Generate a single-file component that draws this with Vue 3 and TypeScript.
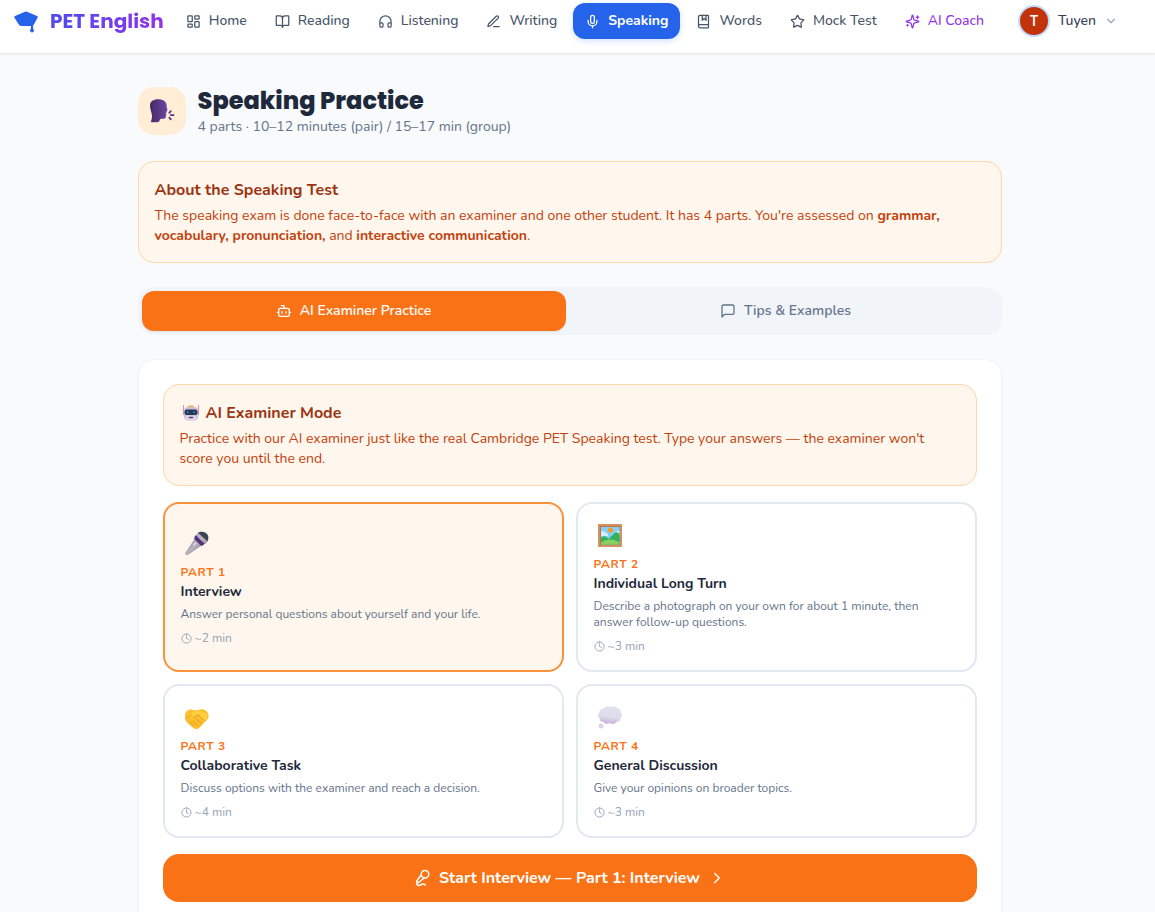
<script setup lang="ts">
import { computed, h, ref } from 'vue'

const icons: Record<string, string[]> = {
  dashboard: [
    'M4 3h5a1 1 0 0 1 1 1v7a1 1 0 0 1-1 1H4a1 1 0 0 1-1-1V4a1 1 0 0 1 1-1z',
    'M15 3h5a1 1 0 0 1 1 1v3a1 1 0 0 1-1 1h-5a1 1 0 0 1-1-1V4a1 1 0 0 1 1-1z',
    'M15 12h5a1 1 0 0 1 1 1v7a1 1 0 0 1-1 1h-5a1 1 0 0 1-1-1v-7a1 1 0 0 1 1-1z',
    'M4 16h5a1 1 0 0 1 1 1v3a1 1 0 0 1-1 1H4a1 1 0 0 1-1-1v-3a1 1 0 0 1 1-1z',
  ],
  book: [
    'M12 7v14',
    'M3 18a1 1 0 0 1-1-1V4a1 1 0 0 1 1-1h5a4 4 0 0 1 4 4 4 4 0 0 1 4-4h5a1 1 0 0 1 1 1v13a1 1 0 0 1-1 1h-6a3 3 0 0 0-3 3 3 3 0 0 0-3-3z',
  ],
  headphones: [
    'M3 14h3a2 2 0 0 1 2 2v3a2 2 0 0 1-2 2H5a2 2 0 0 1-2-2v-7a9 9 0 0 1 18 0v7a2 2 0 0 1-2 2h-1a2 2 0 0 1-2-2v-3a2 2 0 0 1 2-2h3',
  ],
  pen: [
    'M12 20h9',
    'M16.376 3.622a1 1 0 0 1 3.002 3.002L7.368 18.635a2 2 0 0 1-.855.506l-2.872.838a.5.5 0 0 1-.62-.62l.838-2.872a2 2 0 0 1 .506-.854z',
  ],
  mic: [
    'M12 2a3 3 0 0 0-3 3v7a3 3 0 0 0 6 0V5a3 3 0 0 0-3-3Z',
    'M19 10v2a7 7 0 0 1-14 0v-2',
    'M12 19v3',
  ],
  bookmarked: [
    'M10 2v8l3-3 3 3V2',
    'M4 19.5v-15A2.5 2.5 0 0 1 6.5 2H19a1 1 0 0 1 1 1v18a1 1 0 0 1-1 1H6.5a1 1 0 0 1 0-5H20',
  ],
  star: [
    'M11.525 2.295a.53.53 0 0 1 .95 0l2.31 4.679a2.123 2.123 0 0 0 1.595 1.16l5.166.756a.53.53 0 0 1 .294.904l-3.736 3.638a2.123 2.123 0 0 0-.611 1.878l.882 5.14a.53.53 0 0 1-.771.56l-4.618-2.428a2.122 2.122 0 0 0-1.973 0L6.396 21.01a.53.53 0 0 1-.77-.56l.881-5.139a2.122 2.122 0 0 0-.611-1.879L2.16 9.795a.53.53 0 0 1 .294-.906l5.165-.755a2.122 2.122 0 0 0 1.597-1.16z',
  ],
  sparkles: [
    'M9.937 15.5A2 2 0 0 0 8.5 14.063l-6.135-1.582a.5.5 0 0 1 0-.962L8.5 9.936A2 2 0 0 0 9.937 8.5l1.582-6.135a.5.5 0 0 1 .963 0L14.063 8.5A2 2 0 0 0 15.5 9.937l6.135 1.581a.5.5 0 0 1 0 .964L15.5 14.063a2 2 0 0 0-1.437 1.437l-1.582 6.135a.5.5 0 0 1-.963 0z',
    'M20 3v4',
    'M22 5h-4',
    'M4 17v2',
    'M5 18H3',
  ],
  bot: [
    'M12 8V4H8',
    'M6 8h12a2 2 0 0 1 2 2v8a2 2 0 0 1-2 2H6a2 2 0 0 1-2-2v-8a2 2 0 0 1 2-2z',
    'M2 14h2',
    'M20 14h2',
    'M15 13v2',
    'M9 13v2',
  ],
  message: ['M21 15a2 2 0 0 1-2 2H7l-4 4V5a2 2 0 0 1 2-2h14a2 2 0 0 1 2 2z'],
  clock: ['M12 2a10 10 0 1 0 0 20 10 10 0 1 0 0-20z', 'M12 6v6l4 2'],
  micVocal: [
    'm11 7.601-5.994 8.19a1 1 0 0 0 .1 1.298l.817.818a1 1 0 0 0 1.314.087L15.09 12',
    'M16.5 21.174C15.5 20.5 14.372 20 13 20c-2.058 0-3.928 2.356-6 2-2.072-.356-2.775-3.369-1.5-4.5',
    'M16 2a5 5 0 1 0 0 10 5 5 0 1 0 0-10z',
  ],
  chevronDown: ['m6 9 6 6 6-6'],
  chevronRight: ['m9 18 6-6-6-6'],
}

const Icon = (props: { name: string; size: number }) =>
  h(
    'svg',
    {
      width: props.size,
      height: props.size,
      viewBox: '0 0 24 24',
      fill: 'none',
      stroke: 'currentColor',
      'stroke-width': 2,
      'stroke-linecap': 'round',
      'stroke-linejoin': 'round',
      'aria-hidden': 'true',
    },
    icons[props.name].map((d) => h('path', { d })),
  )
Icon.props = ['name', 'size']

const navItems = [
  { label: 'Home', icon: 'dashboard' },
  { label: 'Reading', icon: 'book' },
  { label: 'Listening', icon: 'headphones' },
  { label: 'Writing', icon: 'pen' },
  { label: 'Speaking', icon: 'mic', active: true },
  { label: 'Words', icon: 'bookmarked' },
  { label: 'Mock Test', icon: 'star' },
  { label: 'AI Coach', icon: 'sparkles', accent: true },
]

const tabs = [
  { id: 'practice', label: 'AI Examiner Practice', icon: 'bot' },
  { id: 'tips', label: 'Tips & Examples', icon: 'message' },
]
const activeTab = ref('practice')

const parts = [
  { id: 1, title: 'Interview', text: 'Answer personal questions about yourself and your life.', time: '~2 min' },
  { id: 2, title: 'Individual Long Turn', text: 'Describe a photograph on your own for about 1 minute, then answer follow-up questions.', time: '~3 min' },
  { id: 3, title: 'Collaborative Task', text: 'Discuss options with the examiner and reach a decision.', time: '~4 min' },
  { id: 4, title: 'General Discussion', text: 'Give your opinions on broader topics.', time: '~3 min' },
]
const selectedId = ref(1)
const selected = computed(() => parts.find((p) => p.id === selectedId.value)!)
</script>

<template>
  <div class="page">
    <header class="topbar">
      <a class="brand" href="#">
        <svg class="brand-mark" width="24" height="24" viewBox="0 0 24 24" aria-hidden="true">
          <path d="M11 2.700q1-.5 2 0l10 4.200c.9.4 1.100 1.100.6 1.900l-3.300 6c-.8 1.600-1.800 2.200-3.300 2.200H8c-1.700 0-2.900-.8-3.700-2.200L.5 8.800c-.5-.8-.3-1.500.5-1.900z" fill="#2563eb" />
          <path d="M18 12v9" stroke="#2563eb" stroke-width="2.200" stroke-linecap="round" />
          <circle cx="18" cy="21.500" r="1.900" fill="#2563eb" />
        </svg>
        <span class="brand-name">PET English</span>
      </a>
      <nav class="nav" aria-label="Main">
        <a
          v-for="item in navItems"
          :key="item.label"
          href="#"
          class="nav-link"
          :class="{ active: item.active, accent: item.accent }"
        >
          <Icon :name="item.icon" :size="15" />
          <span>{{ item.label }}</span>
        </a>
      </nav>
      <button class="user" type="button">
        <span class="avatar">T</span>
        <span>Tuyen</span>
        <Icon class="user-chevron" name="chevronDown" :size="14" />
      </button>
    </header>

    <main class="main">
      <div class="heading">
        <div class="heading-icon">
          <svg width="28" height="28" viewBox="0 0 28 28" aria-hidden="true">
            <defs>
              <linearGradient id="head" x1="0" x2="1">
                <stop offset="0" stop-color="#432b62" />
                <stop offset="1" stop-color="#6d45a2" />
              </linearGradient>
            </defs>
            <path d="M2 8c0-3.500 3.500-5.800 8-5.800 5.500 0 8.600 2.600 8.600 6.300 0 1.400.2 2.600.7 3.800.4.900.1 1.500-.7 1.800l.2 1.200-1.200.9.900 1-.6 1c.4 2.600-1.200 4-3.800 3.600-1.400-.2-2.100.4-2.400 1.500-.3 1.300-1 2-2.300 2H4.200c-1.200 0-1.400-.6-1-1.600 1-2.700 1.100-5.100.3-7.700C2.500 12.900 2 10.600 2 8z" fill="url(#head)" />
            <path d="m21.300 15.800 1.500-1.700M22.800 18.200h2.700M21.300 20.700l1.500 1.600" stroke="#57378a" stroke-width="1.800" stroke-linecap="round" />
          </svg>
        </div>
        <div>
          <h1>Speaking Practice</h1>
          <p>4 parts · 10–12 minutes (pair) / 15–17 min (group)</p>
        </div>
      </div>

      <section class="notice">
        <h2>About the Speaking Test</h2>
        <p>
          The speaking exam is done face-to-face with an examiner and one other student. It has 4 parts.
          You're assessed on <strong>grammar, vocabulary, pronunciation,</strong> and
          <strong>interactive communication</strong>.
        </p>
      </section>

      <div class="tabs" role="tablist">
        <button
          v-for="tab in tabs"
          :key="tab.id"
          type="button"
          role="tab"
          class="tab"
          :class="{ active: tab.id === activeTab }"
          :aria-selected="tab.id === activeTab"
          @click="activeTab = tab.id"
        >
          <Icon :name="tab.icon" :size="16" />
          <span>{{ tab.label }}</span>
        </button>
      </div>

      <section class="panel">
        <div class="notice">
          <h2 class="with-emoji">
            <svg width="22" height="20" viewBox="0 0 22 20" aria-hidden="true">
              <path d="M3.500 2.500v9M18.500 2.500v9" stroke="#f4849c" stroke-width="1" stroke-linecap="round" />
              <rect x="8" y="2.500" width="6" height="3" rx="1.500" fill="#f5a742" />
              <rect x="4" y="4" width="14" height="13.500" rx="4" fill="#c9c0dc" />
              <rect x="5.500" y="12.500" width="11" height="5" rx="2.500" fill="#ddd6ea" />
              <rect x="4.500" y="6.500" width="13" height="5.500" rx="2.500" fill="#27334f" />
              <rect x="6.800" y="8" width="2" height="2.500" rx="1" fill="#2580cc" />
              <rect x="13.200" y="8" width="2" height="2.500" rx="1" fill="#2580cc" />
              <rect x="8.700" y="13.700" width="4.600" height="1.500" rx=".7" fill="#4d4460" />
            </svg>
            <span>AI Examiner Mode</span>
          </h2>
          <p>
            Practice with our AI examiner just like the real Cambridge PET Speaking test. Type your answers —
            the examiner won't score you until the end.
          </p>
        </div>

        <div class="parts">
          <button
            v-for="part in parts"
            :key="part.id"
            type="button"
            class="part"
            :class="{ selected: part.id === selectedId }"
            :aria-pressed="part.id === selectedId"
            @click="selectedId = part.id"
          >
            <svg class="part-emoji" width="32" height="32" viewBox="0 0 32 32" aria-hidden="true">
              <template v-if="part.id === 1">
                <defs>
                  <linearGradient id="handle" x1="0" y1="0" x2="1" y2="1">
                    <stop offset=".1" stop-color="#77717f" />
                    <stop offset=".5" stop-color="#bbb5c2" />
                    <stop offset=".9" stop-color="#77727f" />
                  </linearGradient>
                </defs>
                <path d="m14 10.500 6.500 7L6.800 27c-1.200.8-3.300-1-2.400-2.600z" fill="url(#handle)" />
                <path d="M16.500 5c3.500-2.500 9-1.500 10.500 2.500 1.200 3.500-.5 6.800-3.500 8.300z" fill="#3d4353" />
                <path d="M15 7 23.500 15.500c-.7 1.600-2 2.400-3.500 2.200l-6.700-6.700c0-1.600.5-3 1.700-4z" fill="#533379" />
                <path d="M17 4.800 26 13 24.200 15.300 14.900 7z" fill="#b4afc0" />
                <path d="m13 16.500 1.500-1.500" stroke="#e6e2eb" stroke-width="1.500" stroke-linecap="round" />
              </template>
              <template v-else-if="part.id === 2">
                <rect x="4" y="4" width="24" height="23" rx="1" fill="#d4915f" />
                <rect x="6" y="6" width="20" height="19" fill="#b8754b" />
                <rect x="7" y="7" width="18.500" height="17.500" fill="#84d0fb" />
                <path d="M7 12c2-2 4-.5 4.500 1 2-.5 3 1.200 2.500 3H7zM25.500 11c-2.500-1-4 1-3.500 3l3.500 1z" fill="#d8ecff" />
                <circle cx="16.500" cy="10" r="2.600" fill="#f59b25" />
                <path d="M7 18c3-3 5-2 7.500 1l6-6c2-1.500 3.500-.5 5 1v10.500H7z" fill="#33b25f" />
                <path d="M7 22.500c6-4 12.500-4 18.500 0v2H7z" fill="#8bcf62" />
              </template>
              <template v-else-if="part.id === 3">
                <g transform="translate(0 2)">
                  <path d="M4 11.500C4.500 7 8 4.500 12 6c2 .6 3.500.6 5.500-.3 4.500-1.700 9.700.8 10 5.300.2 3-1.200 5-3.200 6.600l-5.500 5.900c-2 2-4.800 2-6.500.5l-5-4.200c-2.600-2-3.700-5-3.300-8.300z" fill="#fcc02f" />
                  <path d="M12.500 7.500c3-1.500 6-1.500 8.500 0l5 2.500c.8 2.700 0 5-2.200 7l-7.600-6.200-3.400 1.800c-2.300 0-2.600-2.900-.3-5.100z" fill="#ffcf3f" />
                  <path d="m17 11 6.500 5.500M14.500 14.500l6 5M12 17l5 4.500M8.500 17.500l5 5M17 10.800l-3.500 1.900M6 14.500l3.500-3" fill="none" stroke="#e39a26" stroke-width="1" stroke-linecap="round" />
                </g>
              </template>
              <template v-else>
                <defs>
                  <linearGradient id="cloud" x1=".6" y1="0" x2=".4" y2="1">
                    <stop offset="0" stop-color="#e0e2ea" />
                    <stop offset=".6" stop-color="#e0dcea" />
                    <stop offset="1" stop-color="#c5afdf" />
                  </linearGradient>
                </defs>
                <path d="M10 6.500c1.500-2.200 4.300-2.700 6.500-1.500 2.500-1.300 5.500-.8 7 1.300 2.200.2 3.500 2 3.300 4 1.700 1.700 1.600 4.200-.2 5.700.2 2.500-1.800 4-3.800 3.800-1.700 2.400-4.900 2.700-7 1.200-2.300 1.500-5.300.9-6.700-1.300-2.300.1-3.700-1.500-3.500-3.500-2-1.500-2.100-4.300-.2-5.800.2-2.300 2-4 4.600-3.900z" fill="url(#cloud)" />
                <circle cx="7" cy="24" r="2.500" fill="#dbd4e7" />
              </template>
            </svg>
            <span class="part-label">PART {{ part.id }}</span>
            <span class="part-title">{{ part.title }}</span>
            <span class="part-text">{{ part.text }}</span>
            <span class="part-time">
              <Icon name="clock" :size="11" />
              <span>{{ part.time }}</span>
            </span>
          </button>
        </div>

        <button class="start" type="button">
          <Icon name="micVocal" :size="18" />
          <span>Start Interview — Part {{ selected.id }}: {{ selected.title }}</span>
          <Icon name="chevronRight" :size="18" />
        </button>
      </section>
    </main>
  </div>
</template>

<style>
body {
  margin: 0;
  background: #f8fafc;
}
</style>

<style scoped>
.page {
  min-height: 100vh;
  background: #f8fafc;
  color: #1e293b;
  font-family: Nunito, Roboto, "Liberation Sans", sans-serif;
  font-size: 14px;
  line-height: 20px;
}

.page *,
.page {
  box-sizing: border-box;
}

h1,
h2,
p {
  margin: 0;
}

button {
  margin: 0;
  border: 0;
  background: none;
  font: inherit;
  color: inherit;
  cursor: pointer;
}

a {
  color: inherit;
  text-decoration: none;
}

svg {
  display: block;
  flex-shrink: 0;
}

.topbar {
  display: flex;
  align-items: center;
  padding: 3px 37px 14px 14px;
  border-bottom: 1px solid #e9eef4;
  background: #fff;
  box-shadow: 0 1px 2px rgba(15, 23, 42, 0.05);
}

.brand {
  display: flex;
  align-items: center;
  gap: 12px;
}

.brand-name {
  font-family: Poppins, Inter, "Open Sans", sans-serif;
  font-size: 20px;
  line-height: 28px;
  font-weight: 700;
  white-space: nowrap;
  color: transparent;
  background: linear-gradient(90deg, #4f4cec, #9333ea);
  background-clip: text;
}

.nav {
  display: flex;
  gap: 4px;
  margin-left: 10px;
}

.nav-link {
  display: flex;
  align-items: center;
  gap: 8px;
  padding: 8px 12px;
  border-radius: 12px;
  font-weight: 500;
  color: #475569;
  white-space: nowrap;
}

.nav-link.active {
  background: #2563eb;
  color: #fff;
  font-weight: 700;
  box-shadow: 0 2px 6px rgba(37, 99, 235, 0.2);
}

.nav-link.accent {
  color: #9333ea;
}

.user {
  display: flex;
  align-items: center;
  gap: 8px;
  margin-left: auto;
  padding: 0;
  font-weight: 500;
  color: #334155;
}

.avatar {
  display: grid;
  place-items: center;
  width: 32px;
  height: 32px;
  border: 2px solid #bfdbfe;
  border-radius: 50%;
  background: #c2330c;
  color: #fff;
  font-family: Roboto, sans-serif;
}

.user-chevron {
  color: #94a3b8;
}

.main {
  max-width: 864px;
  margin: 0 auto;
  padding: 31px 32px 32px 16px;
  box-sizing: content-box;
}

.heading {
  display: flex;
  align-items: center;
  gap: 12px;
  margin-bottom: 24px;
}

.heading-icon {
  display: grid;
  place-items: center;
  width: 48px;
  height: 48px;
  border-radius: 16px;
  background: #ffedd5;
}

h1 {
  font-family: Poppins, Inter, "Open Sans", sans-serif;
  font-size: 24px;
  line-height: 32px;
  font-weight: 800;
}

.heading p {
  color: #64748b;
}

.notice {
  padding: 16px;
  border: 1px solid #fed7aa;
  border-radius: 16px;
  background: #fff7ed;
  color: #c2410c;
}

.notice h2 {
  margin-bottom: 4px;
  font-size: 16px;
  line-height: 24px;
  font-weight: 700;
  color: #9a3412;
}

.notice .with-emoji {
  display: flex;
  align-items: center;
  gap: 4px;
}

.tabs {
  display: flex;
  gap: 8px;
  margin: 24px 0;
  padding: 4px;
  border-radius: 16px;
  background: #f1f5f9;
}

.tab {
  display: flex;
  flex: 1;
  align-items: center;
  justify-content: center;
  gap: 8px;
  padding: 10px;
  border-radius: 12px;
  font-weight: 600;
  color: #64748b;
}

.tab.active {
  background: #f97316;
  color: #fff;
  box-shadow: 0 1px 2px rgba(15, 23, 42, 0.08);
}

.panel {
  padding: 24px;
  border: 1px solid #f1f5f9;
  border-radius: 16px;
  background: #fff;
  box-shadow: 0 1px 2px rgba(15, 23, 42, 0.05);
}

.parts {
  display: grid;
  grid-template-columns: 1fr 1fr;
  gap: 12px;
  margin: 16px 0;
}

.part {
  display: flex;
  flex-direction: column;
  justify-content: center;
  align-items: flex-start;
  padding: 16px;
  border: 2px solid #e2e8f0;
  border-radius: 16px;
  background: #fff;
  text-align: left;
  font-size: 12px;
  line-height: 16px;
}

.part.selected {
  border-color: #fb923c;
  background: #fff7ed;
}

.part-emoji {
  margin-bottom: 4px;
}

.part-label {
  font-weight: 700;
  letter-spacing: 0.05em;
  color: #f97316;
}

.part-title {
  margin: 2px 0 4px;
  font-size: 14px;
  line-height: 20px;
  font-weight: 700;
}

.part-text {
  color: #64748b;
}

.part-time {
  display: flex;
  align-items: center;
  gap: 3px;
  margin-top: 8px;
  color: #94a3b8;
}

.start {
  display: flex;
  align-items: center;
  justify-content: center;
  gap: 8px;
  width: 100%;
  padding: 12px;
  border-radius: 16px;
  background: #f97316;
  color: #fff;
  font-size: 16px;
  line-height: 24px;
  font-weight: 700;
}
</style>
